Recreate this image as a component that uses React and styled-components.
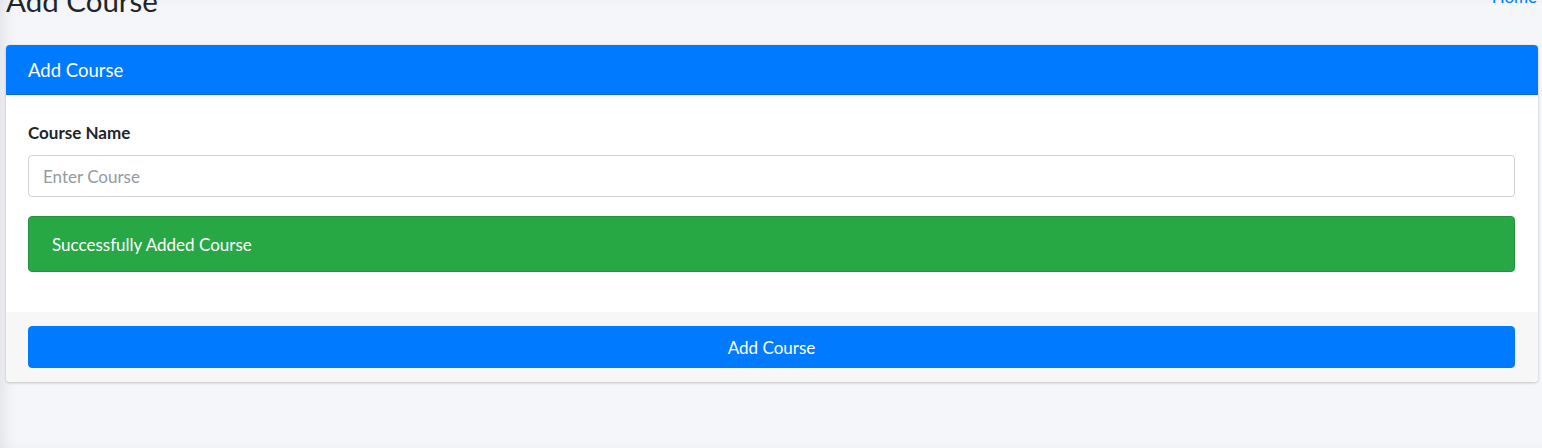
import styled, { createGlobalStyle } from "styled-components";

const GlobalStyle = createGlobalStyle`
  html, body {
    margin: 0;
    padding: 0;
    background: #f4f6f9;
    font-family: "Source Sans Pro", Lato, "Liberation Sans", sans-serif;
    color: #212529;
    overflow: hidden;
  }
`;

const Page = styled.div`
  height: 448px;
  box-sizing: border-box;
  padding: 0 4px 0 6px;
  background: #f4f6f9;
  box-shadow: inset 10px 0 18px -10px rgba(0, 0, 0, 0.12);
  overflow: hidden;
`;

const ContentHeader = styled.div`
  display: flex;
  justify-content: space-between;
  align-items: flex-start;
  margin-top: -17px;
  height: 62px;
`;

const Title = styled.h1`
  margin: 0;
  font-size: 29.5px;
  font-weight: 400;
  line-height: 35px;
  color: #212529;
`;

const Breadcrumb = styled.a`
  margin-top: 2px;
  margin-right: 1px;
  font-size: 17px;
  line-height: 24px;
  color: #007bff;
  text-decoration: none;
`;

const Card = styled.div`
  background: #fff;
  border-radius: 4px;
  box-shadow: 0 0 1px rgba(0, 0, 0, 0.125), 0 1px 3px rgba(0, 0, 0, 0.2);
  overflow: hidden;
`;

const CardHeader = styled.div`
  height: 50px;
  box-sizing: border-box;
  padding: 0 22px;
  display: flex;
  align-items: center;
  background: #007bff;
  border-bottom: 1px solid rgba(0, 0, 0, 0.125);
  color: #fff;
  font-size: 18.5px;
`;

const CardBody = styled.div`
  padding: 26px 23px 40px 22px;
`;

const Label = styled.label`
  display: block;
  font-size: 17px;
  font-weight: 700;
  line-height: 24px;
  margin-bottom: 10px;
`;

const Input = styled.input`
  display: block;
  width: 100%;
  height: 42px;
  box-sizing: border-box;
  padding: 0 14px;
  border: 1px solid #ced4da;
  border-radius: 4px;
  font-family: inherit;
  font-size: 17px;
  color: #495057;
  outline: none;
  &::placeholder {
    color: #939ba2;
  }
`;

const Alert = styled.div`
  margin-top: 19px;
  height: 56px;
  box-sizing: border-box;
  padding: 0 23px;
  display: flex;
  align-items: center;
  background: #28a745;
  border: 1px solid #23923d;
  border-radius: 4px;
  color: #fff;
  font-size: 17px;
`;

const CardFooter = styled.div`
  padding: 14px 23px 14px 22px;
  background: #f7f7f7;
`;

const Button = styled.button`
  display: block;
  width: 100%;
  height: 42px;
  border: 1px solid #007bff;
  border-radius: 4px;
  background: #007bff;
  color: #fff;
  font-family: inherit;
  font-size: 17px;
  cursor: pointer;
`;

export default function App() {
  return (
    <>
      <GlobalStyle />
      <Page>
        <ContentHeader>
          <Title>Add Course</Title>
          <Breadcrumb href="#">Home</Breadcrumb>
        </ContentHeader>
        <Card>
          <CardHeader>Add Course</CardHeader>
          <CardBody>
            <Label>Course Name</Label>
            <Input placeholder="Enter Course" />
            <Alert>Successfully Added Course</Alert>
          </CardBody>
          <CardFooter>
            <Button>Add Course</Button>
          </CardFooter>
        </Card>
      </Page>
    </>
  );
}
